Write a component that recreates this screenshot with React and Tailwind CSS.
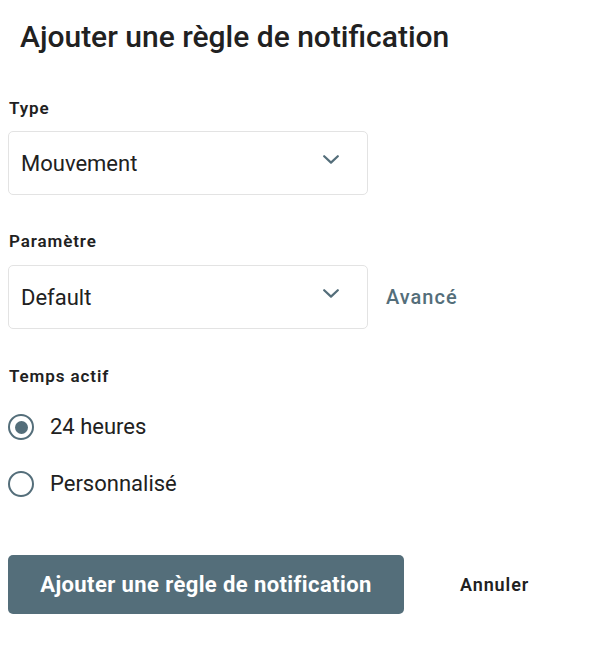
import React, { useState } from 'react';

function Chevron() {
  return (
    <svg width="16" height="9" viewBox="0 0 16 9" fill="none" className="text-[#546e7a]">
      <path d="M1.2 1.2 L8 7.6 L14.8 1.2" stroke="currentColor" strokeWidth="2.2" strokeLinecap="round" strokeLinejoin="round" />
    </svg>
  );
}

function Select({ value }) {
  return (
    <div className="flex h-[64px] w-[360px] items-center justify-between rounded-[5px] border border-[#e3e3e3] bg-white pl-[12px] pr-[28px]">
      <span className="text-[22px] text-[#212121]">{value}</span>
      <span className="-mt-[7px] flex"><Chevron /></span>
    </div>
  );
}

function Radio({ checked, label, onClick }) {
  return (
    <button type="button" onClick={onClick} className="flex h-[28px] items-center gap-[16px] text-left">
      <span className="flex h-[26px] w-[26px] items-center justify-center rounded-full border-[2.5px] border-[#546e7a]">
        {checked && <span className="h-[13px] w-[13px] rounded-full bg-[#546e7a]" />}
      </span>
      <span className="text-[22px] leading-[28px] text-[#212121]">{label}</span>
    </button>
  );
}

export default function App() {
  const [period, setPeriod] = useState('24h');

  return (
    <div className="min-h-screen bg-white px-[8px] font-['Roboto',sans-serif] text-[#212121]">
      <h1 className="pl-[12px] pt-[18px] text-[30px] font-medium leading-[38px]">
        Ajouter une règle de notification
      </h1>

      <div className="mt-[42px] pl-px text-[17px] font-semibold leading-[20px] tracking-[0.9px]">Type</div>
      <div className="mt-[13px]">
        <Select value="Mouvement" />
      </div>

      <div className="mt-[36px] pl-px text-[17px] font-semibold leading-[20px] tracking-[0.9px]">Paramètre</div>
      <div className="mt-[14px] flex items-center gap-[18px]">
        <Select value="Default" />
        <span className="text-[20px] font-medium tracking-[1px] text-[#546e7a]">Avancé</span>
      </div>

      <div className="mt-[37px] pl-px text-[17px] font-semibold leading-[20px] tracking-[0.9px]">Temps actif</div>

      <div className="mt-[27px] flex flex-col gap-[29px]">
        <Radio checked={period === '24h'} label="24 heures" onClick={() => setPeriod('24h')} />
        <Radio checked={period === 'custom'} label="Personnalisé" onClick={() => setPeriod('custom')} />
      </div>

      <div className="mt-[57px] flex items-center">
        <button type="button" className="h-[59px] w-[396px] rounded-[5px] bg-[#546e7a] text-[22px] font-bold tracking-[0.4px] text-white">
          Ajouter une règle de notification
        </button>
        <button type="button" className="ml-[56px] text-[18px] font-semibold tracking-[0.9px] text-[#212121]">
          Annuler
        </button>
      </div>
    </div>
  );
}
